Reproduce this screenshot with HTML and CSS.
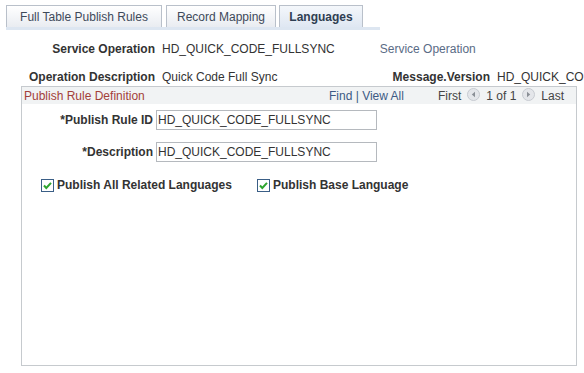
FILE: index.html
```html
<!DOCTYPE html>
<html lang="en">
<head>
    <meta charset="UTF-8">
    <title>Languages</title>
    <link rel="stylesheet" href="styles.css">
</head>
<body>
    <div class="tabs">
        <div class="tab tab-one">Full Table Publish Rules</div>
        <div class="tab tab-two">Record Mapping</div>
        <div class="tab tab-three active">Languages</div>
    </div>

    <div class="info-row row-one">
        <span class="label">Service Operation</span>
        <span class="value">HD_QUICK_CODE_FULLSYNC</span>
        <span class="link">Service Operation</span>
    </div>
    <div class="info-row row-two">
        <span class="label">Operation Description</span>
        <span class="value desc">Quick Code Full Sync</span>
        <span class="label version">Message.Version</span>
        <span class="value">HD_QUICK_CO</span>
    </div>

    <div class="box">
        <div class="box-header">
            <span class="box-title">Publish Rule Definition</span>
            <span class="nav">
                <span class="find">Find | View All</span>
                <span class="pager">
                    First
                    <svg class="arrow" width="13" height="13" viewBox="0 0 13 13"><circle cx="6.5" cy="6.5" r="6" fill="#e4e6ea" stroke="#c6cad0"/><path d="M8 3.8 L4.8 6.5 L8 9.2 Z" fill="#8a8f96"/></svg>
                    1 of 1
                    <svg class="arrow" width="13" height="13" viewBox="0 0 13 13"><circle cx="6.5" cy="6.5" r="6" fill="#e4e6ea" stroke="#c6cad0"/><path d="M5 3.8 L8.2 6.5 L5 9.2 Z" fill="#8a8f96"/></svg>
                    Last
                </span>
            </span>
        </div>

        <div class="field">
            <label class="label">*Publish Rule ID</label>
            <div class="input">HD_QUICK_CODE_FULLSYNC</div>
        </div>
        <div class="field">
            <label class="label">*Description</label>
            <div class="input">HD_QUICK_CODE_FULLSYNC</div>
        </div>

        <div class="checks">
            <div class="check check-one">
                <svg class="box-icon" width="13" height="13" viewBox="0 0 13 13"><rect x="0.5" y="0.5" width="12" height="12" fill="#fff" stroke="#3a5e86"/><path d="M3 6.5 L5.3 9 L10 3.8" fill="none" stroke="#2fa52f" stroke-width="2"/></svg>
                <span>Publish All Related Languages</span>
            </div>
            <div class="check">
                <svg class="box-icon" width="13" height="13" viewBox="0 0 13 13"><rect x="0.5" y="0.5" width="12" height="12" fill="#fff" stroke="#3a5e86"/><path d="M3 6.5 L5.3 9 L10 3.8" fill="none" stroke="#2fa52f" stroke-width="2"/></svg>
                <span>Publish Base Language</span>
            </div>
        </div>
    </div>
</body>
</html>
```

FILE: styles.css
```css
body{
    margin: 0;
    font-family: 'Liberation Sans', Arial, sans-serif;
    font-size: 12px;
    color: #333;
    background-color: #fff;
    overflow: hidden;
}
.tabs{
    display: flex;
    margin: 5px 0 0 6px;
    width: 374px;
    border-bottom: 3px solid #dde6f1;
    height: 22px;
}
.tab{
    flex-shrink: 0;
    box-sizing: border-box;
    border: 1px solid #b9c0ca;
    border-bottom: none;
    padding-top: 4px;
    text-align: center;
    color: #3e4a5a;
    background: linear-gradient(#ffffff, #e9ecf1);
}
.tab-one{
    width: 156px;
}
.tab-two{
    width: 110px;
    margin-left: 4px;
}
.tab-three{
    width: 84px;
    margin-left: 3px;
}
.tab.active{
    font-weight: bold;
    background: linear-gradient(#f4f7fb, #dfe7f2);
    color: #2f3e52;
}
.info-row{
    display: flex;
    align-items: center;
    white-space: nowrap;
}
.info-row span{
    flex-shrink: 0;
}
.row-one{
    margin-top: 11px;
    height: 15px;
}
.row-two{
    margin-top: 13px;
    height: 15px;
}
.info-row .label{
    width: 155px;
    text-align: right;
    font-weight: bold;
    color: #333;
}
.info-row .value{
    margin-left: 7px;
}
.info-row .link{
    margin-left: 45px;
    color: #5a6c86;
}
.info-row .desc{
    width: 222px;
}
.info-row .version{
    width: 106px;
}
.box{
    margin: 2px 0 0 21px;
    width: 554px;
    height: 278px;
    border: 1px solid #c6cace;
}
.box-header{
    display: flex;
    justify-content: space-between;
    align-items: center;
    height: 17px;
    background-color: #f1f3f4;
    padding: 0 12px 0 2px;
}
.box-title{
    color: #a3403a;
}
.nav{
    display: flex;
    color: #3d5a84;
}
.find{
    margin-right: 34px;
}
.pager{
    display: flex;
    align-items: center;
    gap: 6px;
    color: #444;
}
.arrow{
    margin-top: -3px;
}
.field{
    display: flex;
    align-items: center;
    margin-top: 6px;
    height: 20px;
}
.field + .field{
    margin-top: 12px;
}
.field .label{
    width: 131px;
    text-align: right;
    font-weight: bold;
    color: #333;
}
.input{
    margin-left: 3px;
    width: 218px;
    height: 18px;
    line-height: 18px;
    border: 1px solid #b5b9be;
    padding-left: 1px;
}
.checks{
    display: flex;
    margin: 16px 0 0 19px;
}
.check{
    display: flex;
    align-items: center;
    gap: 3px;
    font-weight: bold;
    color: #333;
}
.check-one{
    width: 216px;
}
```
